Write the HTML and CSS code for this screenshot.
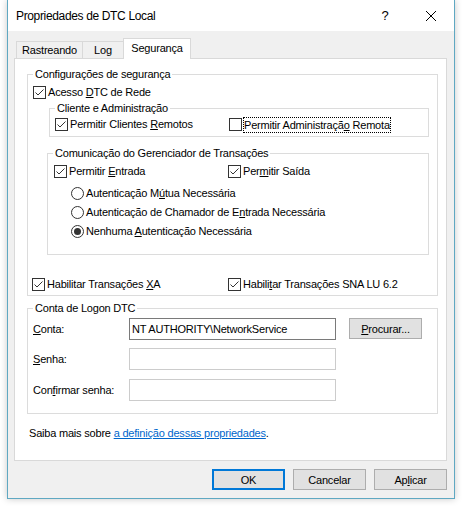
FILE: index.html
```html
<!DOCTYPE html>
<html lang="pt">
<head>
<meta charset="utf-8">
<title>Propriedades de DTC Local</title>
<link rel="stylesheet" href="styles.css">
</head>
<body>
<div class="window">
  <div class="titlebar">
    <span class="title">Propriedades de DTC Local</span>
    <span class="tbtn help">?</span>
    <span class="tbtn close"><svg width="10" height="10" viewBox="0 0 10 10"><path d="M0 0L10 10M10 0L0 10" stroke="#000" stroke-width="1"/></svg></span>
  </div>
  <div class="body">
    <div class="tabs">
      <div class="tab t1">Rastreando</div>
      <div class="tab t2">Log</div>
      <div class="tab active">Segurança</div>
    </div>
    <div class="panel">
      <fieldset class="grp outer">
        <legend>Configurações de segurança</legend>
        <div class="cb acesso"><svg class="box" width="13" height="13" viewBox="0 0 13 13"><rect x="0.5" y="0.5" width="12" height="12" fill="#fff" stroke="#333"/><path d="M2.5 6.5L5 9L10.5 3.5" fill="none" stroke="#333"/></svg><span>Acesso <u>D</u>TC de Rede</span></div>
        <fieldset class="grp cliente">
          <legend>Cliente e Administração</legend>
          <div class="pair">
            <div class="cb first"><svg class="box" width="13" height="13" viewBox="0 0 13 13"><rect x="0.5" y="0.5" width="12" height="12" fill="#fff" stroke="#333"/><path d="M2.5 6.5L5 9L10.5 3.5" fill="none" stroke="#333"/></svg><span>Permitir Clientes <u>R</u>emotos</span></div>
            <div class="cb"><svg class="box" width="13" height="13" viewBox="0 0 13 13"><rect x="0.5" y="0.5" width="12" height="12" fill="#fff" stroke="#333"/></svg><span class="focus">Permitir Administraçã<u>o</u> Remota</span></div>
          </div>
        </fieldset>
        <fieldset class="grp comm">
          <legend>Comunicação do Gerenciador de Transações</legend>
          <div class="pair">
            <div class="cb first"><svg class="box" width="13" height="13" viewBox="0 0 13 13"><rect x="0.5" y="0.5" width="12" height="12" fill="#fff" stroke="#333"/><path d="M2.5 6.5L5 9L10.5 3.5" fill="none" stroke="#333"/></svg><span>Permitir <u>E</u>ntrada</span></div>
            <div class="cb"><svg class="box" width="13" height="13" viewBox="0 0 13 13"><rect x="0.5" y="0.5" width="12" height="12" fill="#fff" stroke="#333"/><path d="M2.5 6.5L5 9L10.5 3.5" fill="none" stroke="#333"/></svg><span>Per<u>m</u>itir Saída</span></div>
          </div>
          <div class="radios">
            <div class="rb"><svg class="box" width="13" height="13" viewBox="0 0 13 13"><circle cx="6.5" cy="6.5" r="6" fill="#fff" stroke="#333"/></svg><span>Autenticação M<u>ú</u>tua Necessária</span></div>
            <div class="rb"><svg class="box" width="13" height="13" viewBox="0 0 13 13"><circle cx="6.5" cy="6.5" r="6" fill="#fff" stroke="#333"/></svg><span>Autenticação de Chamador de E<u>n</u>trada Necessária</span></div>
            <div class="rb"><svg class="box" width="13" height="13" viewBox="0 0 13 13"><circle cx="6.5" cy="6.5" r="6" fill="#fff" stroke="#333"/><circle cx="6.5" cy="6.5" r="3.5" fill="#333"/></svg><span>Nenhuma <u>A</u>utenticação Necessária</span></div>
          </div>
        </fieldset>
        <div class="pair xa">
          <div class="cb first"><svg class="box" width="13" height="13" viewBox="0 0 13 13"><rect x="0.5" y="0.5" width="12" height="12" fill="#fff" stroke="#333"/><path d="M2.5 6.5L5 9L10.5 3.5" fill="none" stroke="#333"/></svg><span>Habilitar Transações <u>X</u>A</span></div>
          <div class="cb"><svg class="box" width="13" height="13" viewBox="0 0 13 13"><rect x="0.5" y="0.5" width="12" height="12" fill="#fff" stroke="#333"/><path d="M2.5 6.5L5 9L10.5 3.5" fill="none" stroke="#333"/></svg><span>Habili<u>t</u>ar Transações SNA LU 6.2</span></div>
        </div>
      </fieldset>
      <fieldset class="grp logon">
        <legend>Conta de Logon DTC</legend>
        <div class="frow r1"><span class="lbl"><u>C</u>onta:</span><div class="input">NT AUTHORITY\NetworkService</div><div class="btn browse"><u>P</u>rocurar...</div></div>
        <div class="frow r2"><span class="lbl"><u>S</u>enha:</span><div class="input off"></div></div>
        <div class="frow r3"><span class="lbl">Con<u>f</u>irmar senha:</span><div class="input off"></div></div>
      </fieldset>
      <p class="more">Saiba mais sobre <a class="link">a definição dessas propriedades</a>.</p>
    </div>
    <div class="buttons">
      <div class="btn ok">OK</div>
      <div class="btn">Cancelar</div>
      <div class="btn">Ap<u>l</u>icar</div>
    </div>
  </div>
</div>
</body>
</html>
```
FILE: styles.css
```css
* { box-sizing: border-box; }
html, body { margin: 0; padding: 0; }
body {
  width: 462px;
  height: 506px;
  overflow: hidden;
  background: #fff;
  font-family: "Liberation Sans", Arial, sans-serif;
  font-size: 11px;
  letter-spacing: -0.2px;
  color: #000;
}
.window {
  margin-left: 7px;
  width: 448px;
  height: 499px;
  border: 1px solid #5fa8c2;
  border-top: none;
  background: #f0f0f0;
  box-shadow: 0 0 7px rgba(0, 0, 0, 0.22);
  display: flex;
  flex-direction: column;
}
.titlebar {
  height: 31px;
  background: #fff;
  display: flex;
  align-items: center;
  padding-left: 8px;
}
.title {
  font-size: 12px;
  letter-spacing: -0.35px;
  flex: 1;
}
.tbtn {
  width: 46px;
  height: 31px;
  display: flex;
  align-items: center;
  justify-content: center;
}
.help { font-size: 13px; letter-spacing: 0; }
.body {
  flex: 1;
  display: flex;
  flex-direction: column;
  padding: 7px 7px 8px 6px;
}
.tabs {
  height: 20px;
  display: flex;
  align-items: flex-end;
  padding-left: 2px;
  position: relative;
  z-index: 1;
}
.tab {
  height: 17px;
  border: 1px solid #d9d9d9;
  border-bottom: none;
  background: #f0f0f0;
  display: flex;
  align-items: center;
  justify-content: center;
}
.t1 { width: 67px; }
.t2 { width: 41px; border-left: none; }
.tab.active {
  width: 68px;
  height: 21px;
  margin-left: -1px;
  margin-bottom: -1px;
  background: #fff;
  padding-bottom: 2px;
}
.panel {
  height: 403px;
  border: 1px solid #d9d9d9;
  background: #fff;
  padding-top: 8px;
}
.grp {
  margin: 0;
  padding: 0;
  border: 1px solid #dcdcdc;
  min-width: 0;
}
.grp > legend {
  padding: 0 2px;
  margin-left: 5px;
  height: 15px;
  line-height: 15px;
}
.outer { margin: 0 8px 0 12px; padding-bottom: 4px; }
.cb, .rb {
  display: flex;
  align-items: center;
  height: 13px;
  gap: 2px;
  line-height: 13px;
  white-space: nowrap;
}
.box { flex: none; display: block; }
.acesso { margin-top: 4px; padding-left: 5px; }
.pair { display: flex; height: 13px; }
.cliente { margin: 2px 8px 0 21px; padding-bottom: 5px; }
.cliente .pair { margin-top: 2px; padding-left: 5px; }
.cliente .first { width: 174px; }
.focus {
  display: inline-block;
  border: 1px dotted #000;
  line-height: 14px;
  height: 16px;
  margin-left: -1px;
}
.comm { margin: 9px 8px 0 19px; padding-bottom: 16px; }
.comm .pair { margin-top: 4px; padding-left: 6px; }
.comm .first { width: 174px; }
.radios {
  margin-top: 9px;
  padding-left: 23px;
  display: flex;
  flex-direction: column;
  gap: 6px;
}
.xa { margin-top: 23px; padding-left: 4px; }
.xa .first { width: 196px; }
.logon { margin: 5px 8px 0 12px; padding-bottom: 12px; }
.frow {
  display: flex;
  align-items: center;
  height: 22px;
  padding-left: 5px;
}
.r1 { margin-top: 2px; }
.r2 { margin-top: 8px; }
.r3 { margin-top: 9px; }
.lbl { width: 96px; }
.input {
  width: 207px;
  height: 22px;
  border: 1px solid #7a7a7a;
  background: #fff;
  padding-left: 2px;
  line-height: 20px;
  white-space: nowrap;
}
.input.off { border-color: #cccccc; }
.btn {
  width: 73px;
  height: 21px;
  border: 1px solid #adadad;
  background: #e1e1e1;
  display: flex;
  align-items: center;
  justify-content: center;
}
.browse { margin-left: 13px; align-self: flex-start; }
.more {
  margin: 12px 0 0 14px;
  line-height: 15px;
}
.link { color: #0066cc; text-decoration: underline; }
.buttons {
  margin-top: 8px;
  display: flex;
  justify-content: flex-end;
  gap: 8px;
}
.btn.ok { border: 2px solid #0078d7; }
```
